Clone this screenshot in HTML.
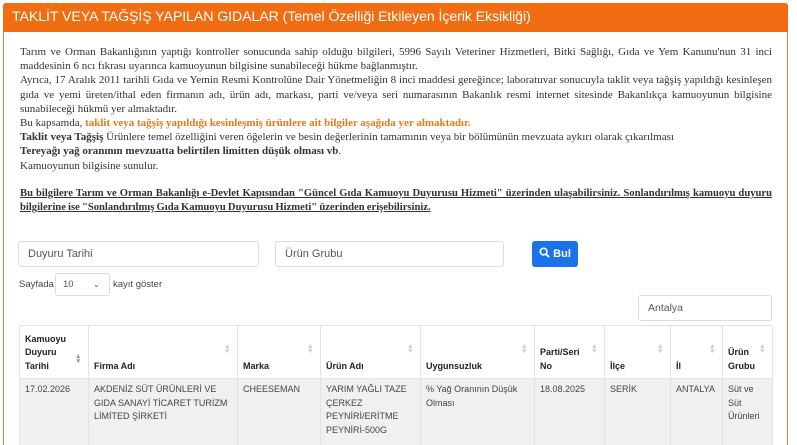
<!DOCTYPE html>
<html><head><meta charset="utf-8"><style>
*{box-sizing:border-box;margin:0;padding:0}
html,body{width:797px;height:445px;overflow:hidden}
body{background:#fff;font-family:"Liberation Sans",sans-serif;color:#333;position:relative}
.panel{position:absolute;left:3px;top:3px;width:785px;height:450px;border:1px solid #c98a5c;border-radius:3px}
.hdr{position:absolute;left:3px;top:3px;width:785px;height:29px;background:#f26d12;color:#fff;font-size:14.2px;line-height:29px;padding-left:9px;border-radius:3px 3px 0 0;letter-spacing:-0.1px}
.txt{position:absolute;left:20px;top:45px;width:752px;font-family:"Liberation Serif",serif;font-size:11px;line-height:14.2px;letter-spacing:0;color:#333}
.txt div{white-space:nowrap;height:14.2px;overflow:hidden}
.j{text-align:justify;text-align-last:justify}
.or{color:#e27a22;font-weight:bold}
.u{font-weight:bold;text-decoration:underline;font-size:10.6px;word-spacing:-0.5px}
.inp{position:absolute;border:1px solid #ddd;border-radius:3px;height:26px;font-size:11px;color:#555;line-height:24px;padding-left:9px}
.btn{position:absolute;left:532px;top:241px;width:46px;height:26px;background:#1a73e8;border-radius:3px;color:#fff;font-size:11px;font-weight:bold;line-height:26px;text-align:center}
.sm{position:absolute;font-size:9.5px;color:#444}
table{position:absolute;left:19px;top:325px;border-collapse:collapse;font-size:9px;width:753px;table-layout:fixed}
th,td{border:1px solid #e3e3e3;vertical-align:bottom;text-align:left;padding:5px 5px;line-height:13.5px}
th{height:53px;font-weight:bold;color:#222;position:relative}
td{vertical-align:top;background:#f0f0f0;height:70px;color:#444;padding-top:4px}
.ar{position:absolute;right:8px;top:18px;color:#ccc;font-size:7px;line-height:5px}
</style></head><body>
<div class="panel"></div>
<div class="hdr">TAKLİT VEYA TAĞŞİŞ YAPILAN GIDALAR (Temel Özelliği Etkileyen İçerik Eksikliği)</div>
<div class="txt">
<div class="j">Tarım ve Orman Bakanlığının yaptığı kontroller sonucunda sahip olduğu bilgileri, 5996 Sayılı Veteriner Hizmetleri, Bitki Sağlığı, Gıda ve Yem Kanunu'nun 31 inci</div>
<div>maddesinin 6 ncı fıkrası uyarınca kamuoyunun bilgisine sunabileceği hükme bağlanmıştır.</div>
<div class="j">Ayrıca, 17 Aralık 2011 tarihli Gıda ve Yemin Resmi Kontrolüne Dair Yönetmeliğin 8 inci maddesi gereğince; laboratuvar sonucuyla taklit veya tağşiş yapıldığı kesinleşen</div>
<div class="j">gıda ve yemi üreten/ithal eden firmanın adı, ürün adı, markası, parti ve/veya seri numarasının Bakanlık resmi internet sitesinde Bakanlıkça kamuoyunun bilgisine</div>
<div>sunabileceği hükmü yer almaktadır.</div>
<div>Bu kapsamda, <span class="or">taklit veya tağşiş yapıldığı kesinleşmiş ürünlere ait bilgiler aşağıda yer almaktadır.</span></div>
<div><b>Taklit veya Tağşiş</b> Ürünlere temel özelliğini veren öğelerin ve besin değerlerinin tamamının veya bir bölümünün mevzuata aykırı olarak çıkarılması</div>
<div><b>Tereyağı yağ oranının mevzuatta belirtilen limitten düşük olması vb</b>.</div>
<div>Kamuoyunun bilgisine sunulur.</div>
<div></div>
<div class="j u">Bu bilgilere Tarım ve Orman Bakanlığı e-Devlet Kapısından "Güncel Gıda Kamuoyu Duyurusu Hizmeti" üzerinden ulaşabilirsiniz. Sonlandırılmış kamuoyu duyuru</div>
<div class="u">bilgilerine ise "Sonlandırılmış Gıda Kamuoyu Duyurusu Hizmeti" üzerinden erişebilirsiniz.</div>
</div>
<div class="inp" style="left:18px;top:241px;width:241px">Duyuru Tarihi</div>
<div class="inp" style="left:275px;top:241px;width:229px">Ürün Grubu</div>
<div class="btn"><svg width="11" height="11" viewBox="0 0 12 12" style="vertical-align:-1px"><circle cx="5" cy="5" r="3.6" fill="none" stroke="#fff" stroke-width="1.8"/><path d="M7.6 7.6L11 11" stroke="#fff" stroke-width="2"/></svg> Bul</div>
<div class="sm" style="left:19px;top:279px">Sayfada</div>
<div class="inp" style="left:55px;top:273px;width:55px;height:23px;line-height:21px;font-size:9.5px;padding-left:7px">10<span style="position:absolute;left:37px;top:0;font-size:8px">&#8964;</span></div>
<div class="sm" style="left:113px;top:279px">kayıt göster</div>
<div class="inp" style="left:638px;top:295px;width:134px;height:26px;font-size:10.5px">Antalya</div>
<table>
<colgroup><col style="width:69px"><col style="width:149px"><col style="width:83px"><col style="width:100px"><col style="width:114px"><col style="width:70px"><col style="width:66px"><col style="width:52px"><col style="width:50px"></colgroup>
<tr>
<th>Kamuoyu<br>Duyuru<br>Tarihi<span class="ar" style="top:28px;color:#999">▴<br>▾</span></th>
<th>Firma Adı<span class="ar">▴<br>▾</span></th>
<th>Marka<span class="ar">▴<br>▾</span></th>
<th>Ürün Adı<span class="ar">▴<br>▾</span></th>
<th>Uygunsuzluk<span class="ar">▴<br>▾</span></th>
<th>Parti/Seri<br>No<span class="ar">▴<br>▾</span></th>
<th>İlçe<span class="ar">▴<br>▾</span></th>
<th>İl<span class="ar">▴<br>▾</span></th>
<th>Ürün<br>Grubu<span class="ar">▴<br>▾</span></th>
</tr>
<tr>
<td>17.02.2026</td>
<td>AKDENİZ SÜT ÜRÜNLERİ VE<br>GIDA SANAYİ TİCARET TURİZM<br>LİMİTED ŞİRKETİ</td>
<td>CHEESEMAN</td>
<td>YARIM YAĞLI TAZE ÇERKEZ PEYNİRİ/ERİTME PEYNİRİ-500G</td>
<td>% Yağ Oranının Düşük Olması</td>
<td>18.08.2025</td>
<td>SERİK</td>
<td>ANTALYA</td>
<td>Süt ve Süt Ürünleri</td>
</tr>
</table>
</body></html>
